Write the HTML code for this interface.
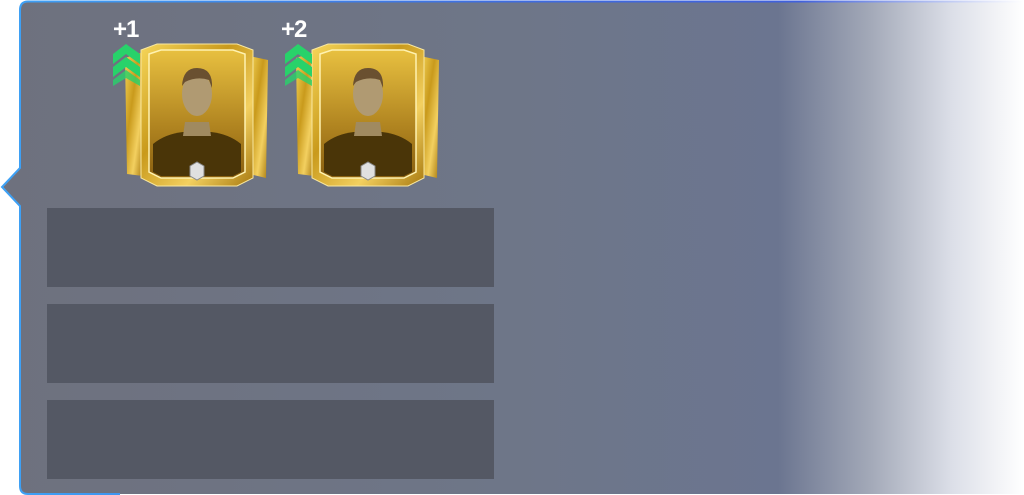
<!DOCTYPE html>
<html><head><style>
body{margin:0;width:1024px;height:495px;background:#fff;position:relative;overflow:hidden;font-family:"Liberation Sans",sans-serif}
.box{position:absolute;left:47px;width:447px;height:79px;background:#545864}
.lbl{position:absolute;color:#fff;font-weight:bold;font-size:24px;letter-spacing:-1px}
</style></head><body>
<svg width="1024" height="495" style="position:absolute;left:0;top:0">
<defs>
<linearGradient id="bg" x1="0" x2="1024" gradientUnits="userSpaceOnUse">
<stop offset="0" stop-color="#6e717e"/><stop offset="0.5" stop-color="#6e7688"/><stop offset="0.76" stop-color="#6b7590"/><stop offset="0.85" stop-color="#a3a9b8"/><stop offset="0.93" stop-color="#dcdfe8"/><stop offset="1" stop-color="#ffffff"/>
</linearGradient>
<linearGradient id="bd" x1="0" x2="1024" gradientUnits="userSpaceOnUse">
<stop offset="0" stop-color="#3ea2f5"/><stop offset="0.5" stop-color="#3f6ce0"/><stop offset="0.78" stop-color="#4060dc"/><stop offset="1" stop-color="#ffffff"/>
</linearGradient>
<linearGradient id="gold" x1="0" y1="0" x2="1" y2="1">
<stop offset="0" stop-color="#f6d65a"/><stop offset="0.4" stop-color="#c99a1c"/><stop offset="0.7" stop-color="#f3d060"/><stop offset="1" stop-color="#a87a10"/>
</linearGradient>
<linearGradient id="inner" x1="0" y1="0" x2="0" y2="1">
<stop offset="0" stop-color="#e8c040"/><stop offset="0.6" stop-color="#b08420"/><stop offset="1" stop-color="#8a6010"/>
</linearGradient>
<g id="card">
<path d="M0 14 L18 8 L18 132 L2 130 Z" fill="url(#gold)"/>
<path d="M124 12 L143 16 L141 134 L124 130 Z" fill="url(#gold)"/>
<path d="M16 6 L32 0 L112 0 L128 6 L128 134 L112 142 L32 142 L16 134 Z" fill="url(#gold)" stroke="#f8e7a0" stroke-width="1"/>
<path d="M24 10 L36 6 L108 6 L120 10 L120 128 L108 134 L36 134 L24 128 Z" fill="url(#inner)" stroke="#fff2b0" stroke-width="1.5"/>
<path d="M28 128 L28 100 Q40 90 58 88 L86 88 Q104 90 116 100 L116 128 L108 132 L36 132 Z" fill="#4a3508"/>
<path d="M60 78 L84 78 L86 92 L58 92 Z" fill="#a08a60"/>
<ellipse cx="72" cy="50" rx="15" ry="22" fill="#b09a72"/>
<path d="M57 42 Q58 24 72 24 Q88 24 87 44 L84 36 Q72 32 60 38 Z" fill="#6a5030"/>
<path d="M65 122 L72 118 L79 122 L79 132 L72 136 L65 132 Z" fill="#e0e0e0" stroke="#888"/>
</g>
<g id="chev" fill="#28d26a">
<path d="M0 12 L13 2 L27 12 L27 22 L13 12 L0 22 Z"/>
<path d="M0 25 L13 15 L27 25 L27 35 L13 25 L0 35 Z"/>
<path d="M0 38 L13 28 L27 38 L27 44 L13 36 L0 44 Z" opacity="0.8"/>
</g>
</defs>
<path d="M28 2 L1010 2 L1024 2 L1024 494 L28 494 Q20 494 20 486 L20 206 L2 187 L20 168 L20 10 Q20 2 28 2 Z" fill="url(#bg)"/>
<path d="M1024 1.5 L28 1.5 Q20 1.5 20 10 L20 168 L2 187 L20 206 L20 486 Q20 494 28 494 L120 494" fill="none" stroke="url(#bd)" stroke-width="2"/>
<use href="#card" x="125" y="44"/>
<use href="#card" x="296" y="44"/>
<use href="#chev" x="113" y="42"/>
<use href="#chev" x="285" y="42"/>
</svg>
<div class="lbl" style="left:113px;top:16px">+1</div>
<div class="lbl" style="left:281px;top:16px">+2</div>
<div class="box" style="top:208px"></div>
<div class="box" style="top:304px"></div>
<div class="box" style="top:400px"></div>
</body></html>
